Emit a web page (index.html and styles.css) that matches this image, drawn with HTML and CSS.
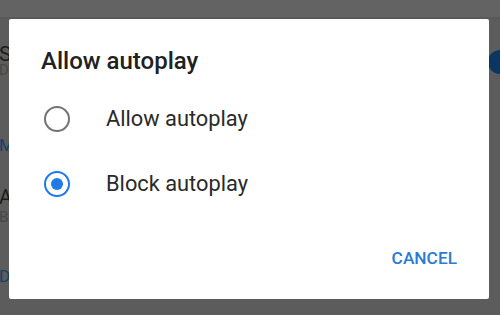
FILE: index.html
```html
<!DOCTYPE html>
<html lang="en">
<head>
  <meta charset="UTF-8">
  <meta name="viewport" content="width=device-width, initial-scale=1.0">
  <title>Allow autoplay</title>
  <link rel="stylesheet" href="styles.css">
</head>
<body>
  <div class="page">
    <div class="toolbar"></div>
    <div class="settings">
      <div class="setting-title first">Sound</div>
      <div class="setting-sub">Don't</div>
      <div class="setting-link">Microphone</div>
      <div class="setting-title second">Autoplay</div>
      <div class="setting-sub">Block</div>
      <div class="setting-link bottom">Done</div>
    </div>
    <span class="toggle"></span>
  </div>

  <div class="scrim">
    <div class="dialog">
      <h1 class="dialog-title">Allow autoplay</h1>
      <div class="options">
        <label class="option">
          <span class="radio"></span>
          <span class="option-label">Allow autoplay</span>
        </label>
        <label class="option">
          <span class="radio checked"></span>
          <span class="option-label">Block autoplay</span>
        </label>
      </div>
      <div class="actions">
        <a href="#" class="text-btn">CANCEL</a>
      </div>
    </div>
  </div>
</body>
</html>
```

FILE: styles.css
```css
* {
  margin: 0;
  padding: 0;
  box-sizing: border-box;
  font-family: Roboto, "Noto Sans", Arial, sans-serif;
}

body {
  width: 500px;
  height: 315px;
  overflow: hidden;
  background: #555;
}

.page {
  position: relative;
  height: 315px;
  display: flex;
  flex-direction: column;
  background: #5c5c5c;
}

.toolbar {
  height: 19px;
  background: #636363;
  border-bottom: 2px solid #595959;
}

.settings {
  flex: 1;
  margin-left: -1px;
  white-space: nowrap;
}

.setting-title {
  color: #1c1c1c;
  font-size: 21px;
  line-height: 18px;
}

.setting-title.first {
  margin-top: 26px;
}

.setting-title.second {
  font-size: 20px;
  line-height: 20px;
  margin-top: 32px;
}

.setting-sub {
  color: #474747;
  font-size: 15px;
  line-height: 14px;
}

.setting-title.second + .setting-sub {
  margin-top: 3px;
}

.setting-link {
  color: #17406b;
  font-size: 17px;
  line-height: 20px;
  margin-top: 58px;
}

.setting-link.bottom {
  margin-top: 42px;
}

.toggle {
  position: absolute;
  left: 488px;
  top: 50px;
  width: 24px;
  height: 24px;
  border-radius: 50%;
  background: #0c3660;
}

.scrim {
  position: absolute;
  top: 0;
  left: 0;
  width: 500px;
  height: 315px;
}

.dialog {
  position: absolute;
  left: 9px;
  top: 19px;
  width: 480px;
  height: 280px;
  background: #fff;
  border-radius: 2px;
  display: flex;
  flex-direction: column;
}

.dialog-title {
  font-size: 24px;
  font-weight: 500;
  color: #212121;
  line-height: 28px;
  padding: 28px 0 0 32px;
}

.options {
  display: flex;
  flex-direction: column;
  padding-top: 11px;
}

.option {
  display: flex;
  align-items: center;
  height: 65px;
  padding-left: 35px;
}

.radio {
  width: 26px;
  height: 26px;
  border-radius: 50%;
  border: 2.5px solid #737373;
  display: flex;
  align-items: center;
  justify-content: center;
}

.radio.checked {
  border-color: #1f7ae6;
}

.radio.checked::after {
  content: "";
  width: 12px;
  height: 12px;
  border-radius: 50%;
  background: #1f7ae6;
}

.option-label {
  margin-left: 36px;
  font-size: 21.8px;
  color: #2a2a2a;
}

.actions {
  display: flex;
  justify-content: flex-end;
  padding: 32px 32px 0 0;
}

.text-btn {
  color: #2b7bd6;
  font-size: 17.3px;
  line-height: 20px;
  font-weight: 500;
  text-decoration: none;
}
```
